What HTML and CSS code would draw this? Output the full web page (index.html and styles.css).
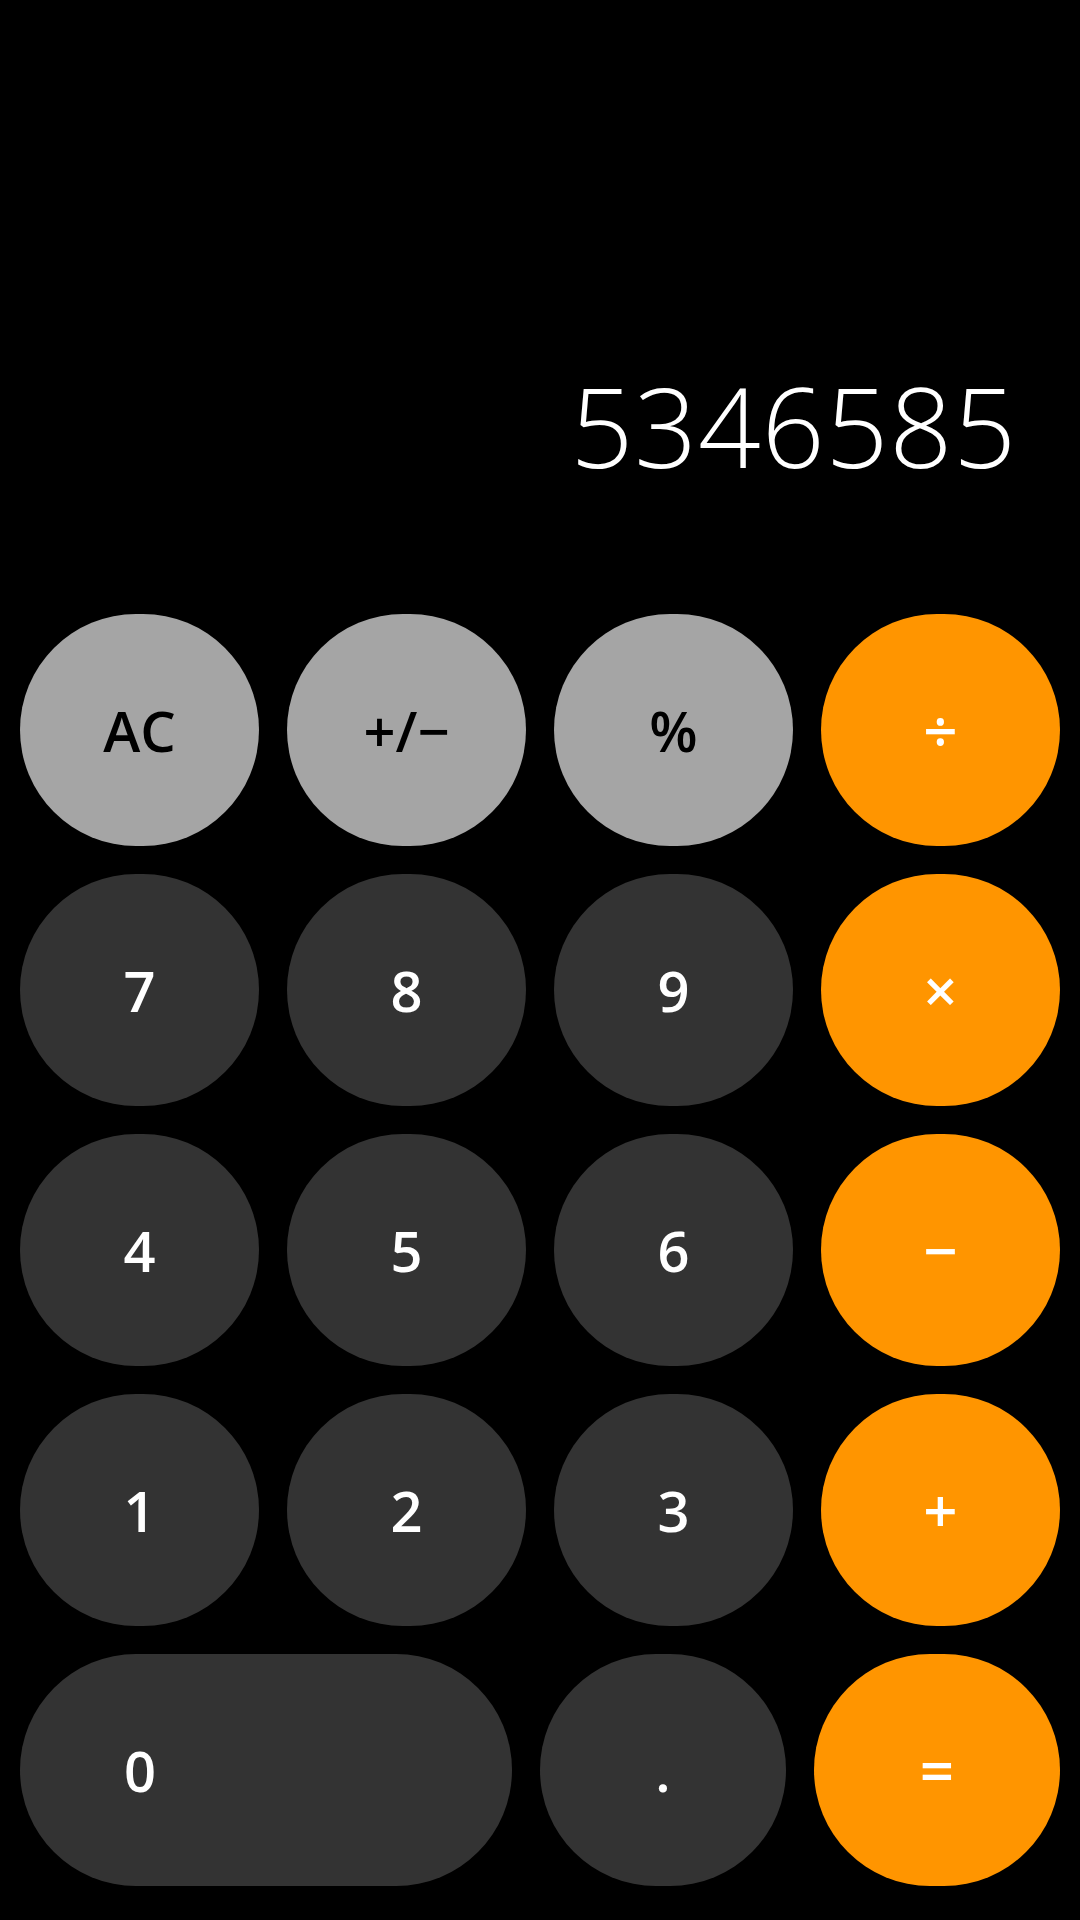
FILE: index.html
```html
<!DOCTYPE html>
<html lang="en">
<head>
<meta charset="utf-8">
<title>Calculator</title>
<link rel="stylesheet" href="styles.css">
</head>
<body>
<main class="calc">
  <section class="display">
    <div class="value">5346585</div>
  </section>
  <section class="keypad">
    <div class="row">
      <button class="key fn">AC</button>
      <button class="key fn">+/−</button>
      <button class="key fn">%</button>
      <button class="key op">÷</button>
    </div>
    <div class="row">
      <button class="key num">7</button>
      <button class="key num">8</button>
      <button class="key num">9</button>
      <button class="key op">×</button>
    </div>
    <div class="row">
      <button class="key num">4</button>
      <button class="key num">5</button>
      <button class="key num">6</button>
      <button class="key op">−</button>
    </div>
    <div class="row">
      <button class="key num">1</button>
      <button class="key num">2</button>
      <button class="key num">3</button>
      <button class="key op">+</button>
    </div>
    <div class="row">
      <button class="key num zero"><span class="zero-label">0</span></button>
      <button class="key num">.</button>
      <button class="key op">=</button>
    </div>
  </section>
</main>
</body>
</html>
```

FILE: styles.css
```css
* { box-sizing: border-box; }
html, body {
  margin: 0;
  padding: 0;
  background: #000;
}
body {
  width: 1080px;
  height: 1920px;
  font-family: "Open Sans", "Noto Sans", sans-serif;
}
.calc {
  height: 1920px;
  display: flex;
  flex-direction: column;
}
.display {
  flex: 1;
  display: flex;
  justify-content: flex-end;
  align-items: flex-end;
  padding: 0 63px 134px 0;
}
.value {
  color: #fff;
  font-size: 110px;
  font-weight: 300;
  line-height: 1;
  letter-spacing: 1px;
}
.keypad {
  display: flex;
  flex-direction: column;
  gap: 28px;
  padding: 0 20px 34px;
}
.row {
  display: flex;
  gap: 28px;
  height: 232px;
}
.key {
  flex: 1 1 0;
  min-width: 0;
  border: 0;
  margin: 0;
  padding: 0;
  border-radius: 116px;
  font-family: inherit;
  font-size: 56px;
  font-weight: 600;
  line-height: 1;
  display: flex;
  align-items: center;
  justify-content: center;
}
.fn { background: #a5a5a5; color: #000; }
.num { background: #333333; color: #fff; }
.op { background: #ff9500; color: #fff; font-size: 60px; }
.zero {
  flex: 0 0 492px;
  justify-content: flex-start;
}
.zero-label {
  display: block;
  width: 240px;
  text-align: center;
}
```
